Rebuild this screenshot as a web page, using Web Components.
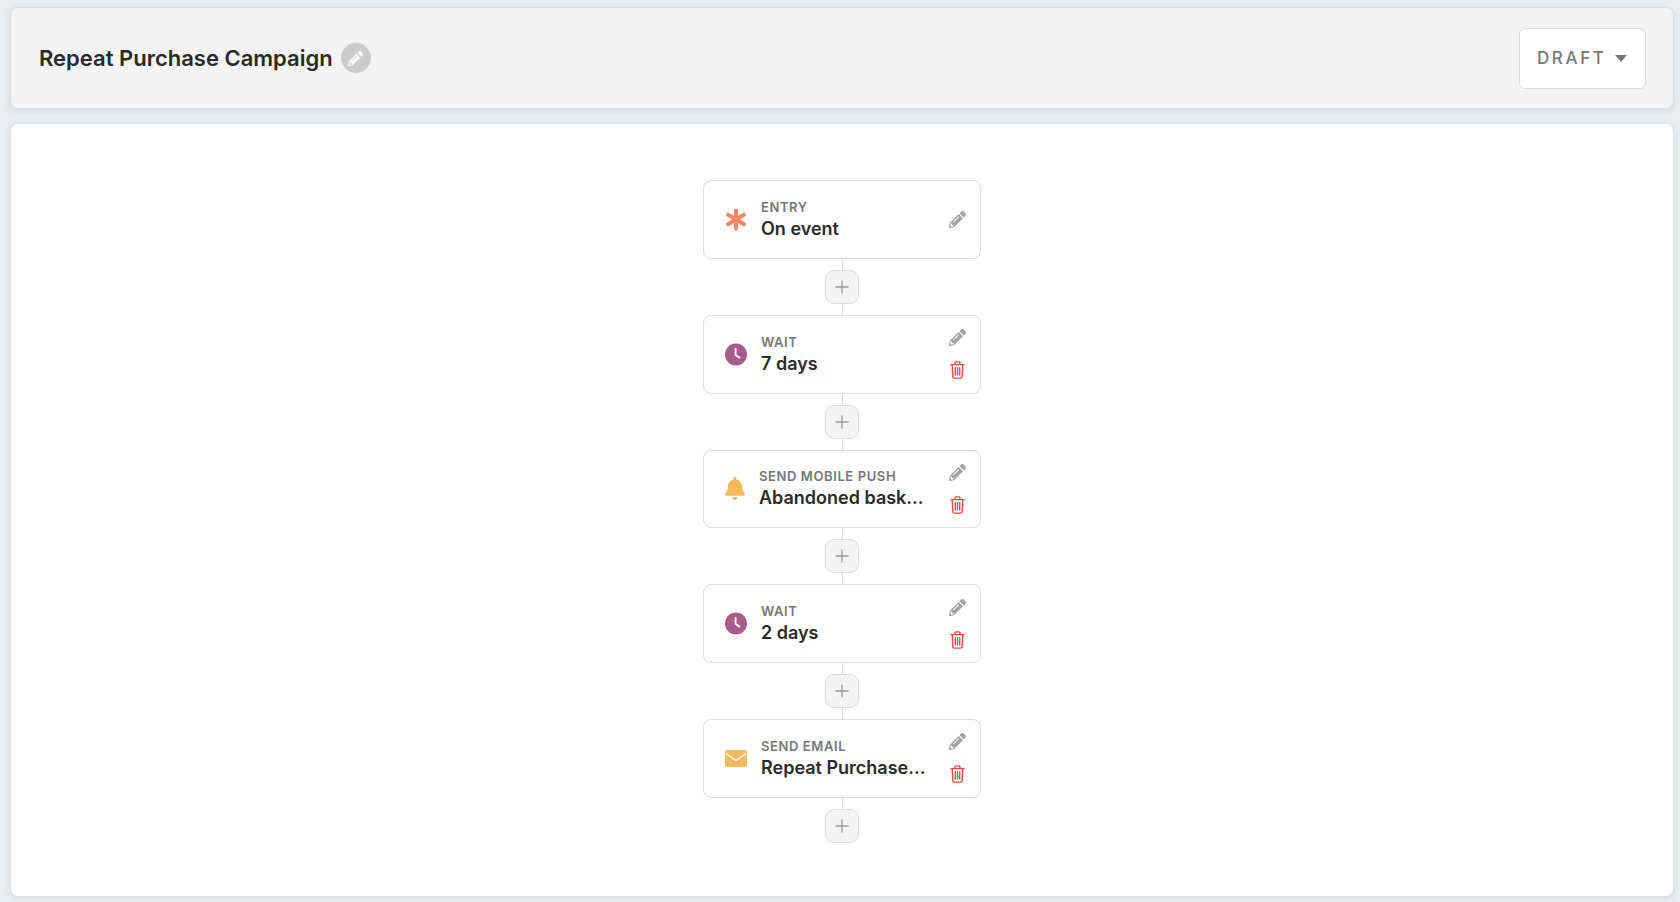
<!DOCTYPE html>
<html>
<head>
<meta charset="utf-8">
<title>Repeat Purchase Campaign</title>
<style>
  html, body { height: 100%; }
  body {
    margin: 0;
    background: #e9edf0;
    font-family: Inter, "Liberation Sans", sans-serif;
    color: #2a2a2a;
    overflow: hidden;
  }
</style>
</head>
<body>
<campaign-page>
  <campaign-header slot="header">
    Repeat Purchase Campaign
  </campaign-header>

  <flow-step label="Entry" locked>
    <step-icon slot="icon" name="asterisk"></step-icon>
    On event
  </flow-step>
  <add-step></add-step>
  <flow-step label="Wait">
    <step-icon slot="icon" name="clock"></step-icon>
    7 days
  </flow-step>
  <add-step></add-step>
  <flow-step label="Send mobile push">
    <step-icon slot="icon" name="bell"></step-icon>
    Abandoned bask...
  </flow-step>
  <add-step></add-step>
  <flow-step label="Wait">
    <step-icon slot="icon" name="clock"></step-icon>
    2 days
  </flow-step>
  <add-step></add-step>
  <flow-step label="Send email">
    <step-icon slot="icon" name="mail"></step-icon>
    Repeat Purchase...
  </flow-step>
  <add-step last></add-step>
</campaign-page>

<script>
const PENCIL = 'M497.9 142.1l-46.1 46.1c-4.7 4.7-12.3 4.7-17 0l-111-111c-4.7-4.7-4.7-12.3 0-17l46.1-46.1c18.7-18.7 49.1-18.7 67.9 0l60.1 60.1c18.8 18.7 18.8 49.100 0 67.900zM284.200 99.800L21.600 362.400.400 483.900c-2.900 16.400 11.400 30.600 27.800 27.800l121.500-21.300 262.600-262.600c4.700-4.700 4.700-12.300 0-17l-111-111c-4.800-4.700-12.400-4.700-17.100 0zM124.100 339.900c-5.500-5.500-5.500-14.300 0-19.800l154-154c5.500-5.500 14.300-5.500 19.800 0s5.500 14.300 0 19.800l-154 154c-5.500 5.500-14.300 5.500-19.800 0zM88 424h48v36.300l-64.500 11.300-31.100-31.100L51.700 376H88v48z'

const ICONS = {
  asterisk: `<svg width="22" height="23" viewBox="0 0 22 23" style="display:block">
      <g stroke="#f5866a" stroke-width="4" stroke-linecap="round">
        <path d="M11 2.500v18M3 6.700l16 9.600M19 6.700L3 16.300"/>
      </g>
    </svg>`,
  clock: `<svg width="22" height="23" viewBox="0 0 22 23" style="display:block">
      <circle cx="11" cy="11.500" r="11" fill="#a95b8b"/>
      <path d="M10.600 6v6l3.800 2.600" fill="none" stroke="#fff" stroke-width="1.900" stroke-linecap="round" stroke-linejoin="round"/>
    </svg>`,
  bell: `<svg width="20" height="23" viewBox="0 0 448 512" style="display:block">
      <path fill="#f4b95f" d="M224 512c35.320 0 63.970-28.650 63.970-64H160.030c0 35.350 28.650 64 63.970 64zm215.390-149.710c-19.320-20.760-55.470-51.990-55.470-154.290 0-77.700-54.480-139.900-127.940-155.160V32c0-17.670-14.320-32-31.980-32s-31.980 14.330-31.980 32v20.840C118.560 68.100 64.080 130.300 64.080 208c0 102.300-36.150 133.530-55.470 154.290-6 6.450-8.660 14.160-8.610 21.710.11 16.400 12.980 32 32.100 32h383.800c19.120 0 32-15.600 32.100-32 .05-7.550-2.610-15.270-8.610-21.710z"/>
    </svg>`,
  mail: `<svg width="22" height="17" viewBox="0 0 22 17" style="display:block">
      <rect width="22" height="17" rx="2" fill="#f4b95f"/>
      <path d="M1 3.500l10 7 10-7" fill="none" stroke="#fff" stroke-width="1.300"/>
    </svg>`
}

class CampaignPage extends HTMLElement {
  constructor() {
    super()
    this.attachShadow({ mode: 'open' })
  }

  connectedCallback() {
    this.shadowRoot.innerHTML = `
      <style>
        :host {
          display: flex;
          flex-direction: column;
          gap: 14px;
          box-sizing: border-box;
          height: 902px;
          padding: 7px 6px 5px 10px;
        }
        main {
          flex: 1;
          display: flex;
          flex-direction: column;
          align-items: center;
          box-sizing: border-box;
          padding-top: 56px;
          background: #fff;
          border: 1px solid #dfe1e3;
          border-radius: 8px;
          box-shadow: 0 1px 6px rgba(40, 50, 60, .08);
        }
      </style>
      <slot name="header"></slot>
      <main><slot></slot></main>
    `
  }
}

class CampaignHeader extends HTMLElement {
  constructor() {
    super()
    this.attachShadow({ mode: 'open' })
  }

  connectedCallback() {
    this.shadowRoot.innerHTML = `
      <style>
        :host {
          display: flex;
          align-items: center;
          justify-content: space-between;
          box-sizing: border-box;
          height: 102px;
          padding: 0 27px 0 28px;
          background: #f4f4f4;
          border: 1px solid #dcdedf;
          border-radius: 8px;
          box-shadow: 0 2px 6px rgba(40, 50, 60, .1);
        }
        .title {
          display: flex;
          align-items: center;
          gap: 8px;
        }
        h1 {
          margin: 0;
          font-size: 22px;
          line-height: 30px;
          font-weight: 600;
          color: #2a2a2a;
        }
        .edit {
          display: flex;
          align-items: center;
          justify-content: center;
          width: 30px;
          height: 30px;
          border-radius: 50%;
          background: #cbcbcb;
        }
        .status {
          display: flex;
          align-items: center;
          gap: 9px;
          box-sizing: border-box;
          width: 127px;
          height: 61px;
          padding-left: 17px;
          background: #fff;
          border: 1px solid #dcdcdc;
          border-radius: 6px;
          font-size: 17px;
          font-weight: 500;
          letter-spacing: 2.600px;
          color: #777;
        }
        .caret {
          width: 0;
          height: 0;
          border: 6px solid transparent;
          border-top: 7px solid #777;
          border-bottom: 0;
        }
      </style>
      <div class="title">
        <h1><slot></slot></h1>
        <span class="edit">
          <svg width="15" height="15" viewBox="0 0 512 512"><path fill="#fff" d="${PENCIL}"/></svg>
        </span>
      </div>
      <div class="status">DRAFT<span class="caret"></span></div>
    `
  }
}

class FlowStep extends HTMLElement {
  constructor() {
    super()
    this.attachShadow({ mode: 'open' })
  }

  connectedCallback() {
    const locked = this.hasAttribute('locked')
    this.shadowRoot.innerHTML = `
      <style>
        :host {
          display: flex;
          align-items: center;
          gap: 14px;
          box-sizing: border-box;
          width: 278px;
          height: 78.750px;
          padding: 0 14px 0 21px;
          background: #fff;
          border: 1px solid #dcdcdc;
          border-radius: 8px;
        }
        .text {
          flex: 1;
          min-width: 0;
          white-space: nowrap;
        }
        .label {
          font-size: 13px;
          line-height: 19px;
          font-weight: 600;
          letter-spacing: .6px;
          text-transform: uppercase;
          color: #777;
        }
        .value {
          font-size: 18px;
          line-height: 24px;
          font-weight: 600;
          color: #2a2a2a;
        }
        .actions {
          display: flex;
          flex-direction: column;
          align-items: center;
          gap: 15px;
        }
        svg { display: block; }
      </style>
      <slot name="icon"></slot>
      <div class="text">
        <div class="label">${this.getAttribute('label')}</div>
        <div class="value"><slot></slot></div>
      </div>
      <div class="actions">
        <svg width="17" height="17" viewBox="0 0 512 512"><path fill="#a3a3a3" d="${PENCIL}"/></svg>
        ${locked ? '' : `
        <svg width="15" height="18" viewBox="0 0 15 18" fill="none" stroke="#e9503f" stroke-width="1.400" stroke-linecap="round" stroke-linejoin="round">
          <path d="M.800 3.600h13.400M5 3.400V1.800c0-.5.4-.9.900-.9h3.200c.5 0 .9.400.9.900v1.600M2.200 3.800l.6 11.800c0 .8.700 1.500 1.500 1.500h6.400c.8 0 1.500-.7 1.500-1.500l.6-11.800M5.300 6.800v7.300M7.500 6.800v7.300M9.700 6.800v7.300"/>
        </svg>`}
      </div>
    `
  }
}

class StepIcon extends HTMLElement {
  constructor() {
    super()
    this.attachShadow({ mode: 'open' })
  }

  connectedCallback() {
    this.shadowRoot.innerHTML = `
      <style>
        :host { display: block; flex: none; }
      </style>
      ${ICONS[this.getAttribute('name')]}
    `
  }
}

class AddStep extends HTMLElement {
  constructor() {
    super()
    this.attachShadow({ mode: 'open' })
  }

  connectedCallback() {
    this.shadowRoot.innerHTML = `
      <style>
        :host {
          position: relative;
          display: flex;
          align-items: center;
          justify-content: center;
          width: 34px;
          height: 56px;
        }
        :host([last]) {
          height: 45px;
          align-items: flex-end;
        }
        :host::before {
          content: '';
          position: absolute;
          left: 16.500px;
          top: 0;
          bottom: 0;
          width: 1px;
          background: #dcdcdc;
        }
        button {
          position: relative;
          display: flex;
          align-items: center;
          justify-content: center;
          box-sizing: border-box;
          width: 34px;
          height: 34px;
          padding: 0;
          background: #f4f4f4;
          border: 1px solid #dcdcdc;
          border-radius: 9px;
        }
      </style>
      <button aria-label="Add step">
        <svg width="14" height="14" viewBox="0 0 14 14"><path d="M7 .500v13M.500 7h13" stroke="#999" stroke-width="1.300"/></svg>
      </button>
    `
  }
}

customElements.define('campaign-page', CampaignPage)
customElements.define('campaign-header', CampaignHeader)
customElements.define('flow-step', FlowStep)
customElements.define('step-icon', StepIcon)
customElements.define('add-step', AddStep)
</script>
</body>
</html>
